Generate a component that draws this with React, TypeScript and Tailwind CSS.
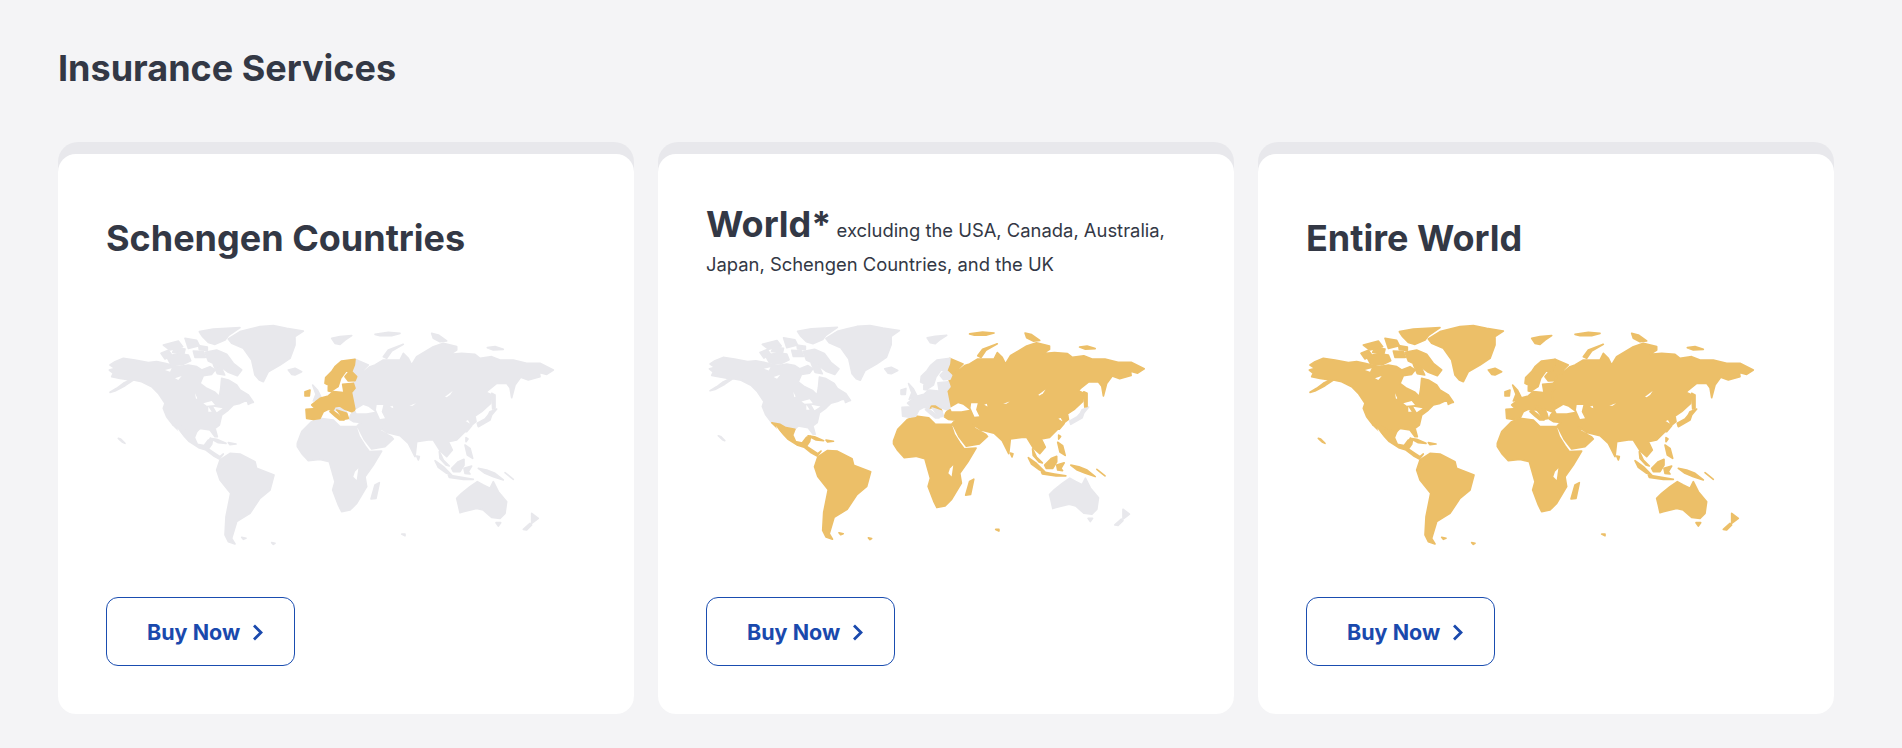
import React from "react";

type Region = "eu" | "west" | "rest";

// coastlines traced by hand in a 1380x720 box
const SHAPES: { region: Region; points: string }[] = [
	// alaska, canada, usa
	{ region: "west", points: "30,150 45,140 70,130 105,135 145,143 170,140 195,145 215,150 240,155 265,150 290,155 305,165 330,155 345,165 335,178 310,182 300,205 320,220 345,232 358,245 362,222 365,190 385,195 410,210 420,225 445,240 460,262 435,258 420,265 400,270 385,285 365,300 358,330 345,340 352,365 345,365 330,345 300,340 290,350 262,345 245,335 219,330 200,305 190,280 195,265 175,235 155,215 125,200 100,195 75,212 45,228 30,232 50,220 70,205 90,195 60,190 35,185 40,175 28,165 45,160" },
	{ region: "west", points: "315,112 350,105 380,118 400,145 425,165 412,182 385,172 362,155 325,138" },
	{ region: "west", points: "200,125 235,116 265,120 272,137 245,150 212,147" },
	{ region: "west", points: "183,115 205,106 215,120 195,132" },
	{ region: "west", points: "190,90 235,78 248,95 210,105" },
	{ region: "west", points: "225,98 255,102 252,115 218,112" },
	{ region: "west", points: "255,70 290,76 298,92 265,100" },
	{ region: "west", points: "298,50 340,42 420,38 385,62 375,75 345,88 325,82 308,65" },
	{ region: "west", points: "280,108 310,110 316,127 285,127" },
	{ region: "west", points: "296,92 322,96 322,106 298,104" },
	{ region: "west", points: "340,148 365,160 374,180 352,176" },
	{ region: "west", points: "440,250 458,262 445,268" },
	{ region: "west", points: "55,370 62,372 75,385 68,382" },
	// greenland, iceland, svalbard
	{ region: "west", points: "385,72 420,50 450,42 480,35 520,32 560,40 610,48 585,65 585,90 570,130 540,150 505,170 490,200 478,195 465,180 455,135 430,100 395,85" },
	{ region: "west", points: "565,165 585,160 605,170 585,180 575,178" },
	{ region: "west", points: "695,70 720,65 755,62 735,75 720,88 705,85" },
	// uk
	{ region: "west", points: "638,210 652,225 665,250 640,258 648,238" },
	// japan
	{ region: "west", points: "1170,290 1190,282 1175,300 1170,315 1135,335 1132,325 1155,312 1165,300" },
	// australia, tasmania, nz
	{ region: "west", points: "1070,550 1085,535 1110,515 1132,500 1150,510 1170,520 1180,500 1195,530 1220,560 1215,595 1200,610 1175,607 1150,585 1130,580 1090,590 1080,593 1075,570" },
	{ region: "west", points: "1188,623 1202,623 1195,633" },
	{ region: "west", points: "1295,595 1315,610 1295,625" },
	{ region: "west", points: "1270,643 1290,625 1295,630 1280,645" },
	// russia and asia, with turkey and arabia
	{ region: "rest", points: "765,133 805,150 790,165 782,178 810,155 825,150 850,135 900,135 910,115 925,130 935,150 950,125 975,110 1000,95 1030,85 1070,95 1070,105 1050,118 1085,115 1125,118 1140,130 1175,125 1200,135 1240,135 1280,145 1320,145 1360,165 1340,178 1318,172 1320,185 1285,195 1262,187 1245,210 1235,248 1230,218 1220,205 1190,205 1165,225 1158,232 1175,240 1172,265 1145,290 1125,303 1128,320 1115,330 1105,312 1092,318 1115,332 1100,350 1095,350 1070,375 1045,380 1057,405 1040,425 1020,407 1000,375 985,375 950,380 945,425 925,385 900,362 860,352 835,336 842,348 875,366 880,372 855,395 815,402 792,372 776,340 770,335 782,322 760,320 748,312 752,300 765,285 760,260 755,235 765,220 760,205 767,197 770,185 755,170 763,150" },
	{ region: "rest", points: "705,275 720,273 735,283 740,295 710,285 700,285" },
	{ region: "rest", points: "850,125 865,105 910,88 875,108 860,130" },
	{ region: "rest", points: "995,55 1015,60 1040,78 1020,80 1000,70" },
	{ region: "rest", points: "825,58 865,52 900,55 875,62 840,62" },
	{ region: "rest", points: "1162,98 1185,95 1210,103 1180,105" },
	{ region: "rest", points: "1175,235 1185,240 1185,280 1178,282" },
	{ region: "rest", points: "1098,368 1104,372 1098,380" },
	// africa, madagascar
	{ region: "rest", points: "592,395 592,385 605,350 635,320 660,310 700,315 720,335 768,335 778,365 795,392 808,410 845,408 820,450 795,485 800,515 770,565 750,585 725,590 715,570 698,525 705,500 695,465 688,440 660,433 625,437 605,415" },
	{ region: "rest", points: "825,510 838,503 828,550 813,552" },
	// mexico, central america, caribbean
	{ region: "rest", points: "219,330 245,335 262,345 290,350 283,368 292,388 312,392 325,375 338,372 335,388 325,402 345,415 360,425 370,417 358,432 340,422 318,405 296,398 268,380 245,355" },
	{ region: "rest", points: "330,370 350,373 378,385 355,383" },
	{ region: "rest", points: "385,383 408,387 390,389" },
	// south america
	{ region: "rest", points: "350,465 360,435 390,415 420,417 465,440 470,460 522,480 510,525 480,550 450,595 410,620 395,670 405,687 385,680 375,660 378,605 392,535 360,495" },
	{ region: "rest", points: "425,667 438,670 430,673" },
	{ region: "rest", points: "515,683 525,685 520,688" },
	{ region: "rest", points: "905,657 915,657 915,662" },
	// south east asia islands
	{ region: "rest", points: "1018,410 1030,435 1048,453 1038,450 1020,430" },
	{ region: "rest", points: "1005,437 1030,455 1055,480 1040,475 1015,457" },
	{ region: "rest", points: "1045,480 1085,487 1120,493 1090,493 1048,487" },
	{ region: "rest", points: "1055,460 1075,440 1092,433 1092,450 1080,470 1060,470" },
	{ region: "rest", points: "1092,460 1115,453 1105,470 1110,477 1095,475" },
	{ region: "rest", points: "1095,390 1110,400 1118,430 1102,420" },
	{ region: "rest", points: "1135,460 1160,465 1185,475 1210,495 1180,485 1155,475" },
	{ region: "rest", points: "1215,473 1240,493 1230,485" },
	{ region: "rest", points: "950,423 958,425 955,435" },
	// schengen block
	{ region: "eu", points: "635,270 660,250 685,243 700,230 730,233 755,235 760,260 765,285 755,290 735,283 720,273 705,275 700,285 685,283 670,290 660,310 640,313 620,310 618,283 650,281 640,275" },
	{ region: "eu", points: "695,285 715,300 732,315 720,315 705,303 690,290" },
	{ region: "eu", points: "710,285 740,295 745,310 730,313 715,290" },
	{ region: "eu", points: "685,215 700,213 695,230 685,228" },
	{ region: "eu", points: "615,230 630,225 628,243 615,243" },
	{ region: "eu", points: "675,205 677,188 695,170 705,155 725,138 765,133 763,150 755,170 770,185 765,197 745,198 735,185 748,170 738,168 722,190 714,215 698,225 685,210" },
	{ region: "eu", points: "728,208 760,205 765,220 755,232 732,232" },
];

// inland seas and lakes
const WATER = [
	"765,285 790,270 805,275 825,290 800,295 770,295",
	"830,270 850,270 845,290 855,310 840,312 828,285",
	"1035,245 1058,228 1050,240 1040,247",
	"928,272 948,265 938,272",
	"870,275 878,272 880,280",
	"765,470 775,460 770,495 760,485",
	"232,340 255,372 250,372 235,350",
	"195,165 215,160 210,170",
	"225,190 245,183 235,195",
	"285,235 292,250 288,252",
	"310,265 335,258 345,270 320,272",
	"325,275 335,290 325,290",
	"340,275 368,280 350,292",
];

function WorldMap({ gold, small }: { gold: Region[]; small?: boolean }) {
	return (
		<svg
			viewBox="0 0 1380 720"
			strokeWidth="5"
			strokeLinejoin="round"
			className={small ? "-ml-1.5 h-[235px] w-[451px]" : "-ml-1.5 h-[240px] w-[460px]"}
		>
			{SHAPES.map((s) => (
				<polygon
					key={s.points}
					points={s.points}
					className={
						gold.includes(s.region)
							? "fill-[#ecbf68] stroke-[#ecbf68]"
							: "fill-[#e8e8ec] stroke-[#e8e8ec]"
					}
				/>
			))}
			{WATER.map((p) => (
				<polygon key={p} points={p} className="fill-white" />
			))}
		</svg>
	);
}

function Card({ heading, map }: { heading: React.ReactNode; map: React.ReactNode }) {
	return (
		<div className="rounded-[20px] bg-[#e8e8ec] pt-3">
			<div className="rounded-[18px] bg-white p-12">
				<div className="h-[113px]">{heading}</div>
				<div className="h-[282px]">{map}</div>
				<button className="flex h-[69px] w-[189px] items-center rounded-[12px] border-[1.5px] border-[#1a4db0] pt-[2px] pl-10 text-[21.5px] font-bold text-[#1a49ad]">
					Buy Now
					<svg viewBox="0 0 12 18" className="ml-3 h-[19px] w-[12px]" fill="none" stroke="currentColor" strokeWidth="2.8">
						<path d="M2 2l7 7-7 7" />
					</svg>
				</button>
			</div>
		</div>
	);
}

export default function App() {
	return (
		<div className="h-screen bg-[#f4f4f6] pl-[58px] pr-[68px] font-['Inter',sans-serif] text-[#333845]">
			<h1 className="h-[142px] pt-[46px] text-[36px] leading-[44px] font-bold">Insurance Services</h1>
			<div className="grid grid-cols-3 gap-6">
				<Card
					heading={<h2 className="text-[36px] leading-[72px] font-bold">Schengen Countries</h2>}
					map={<WorldMap gold={["eu"]} />}
				/>
				<Card
					heading={
						<p className="pt-[5px] text-[18.4px] leading-[34px]">
							<span className="text-[36px] font-bold">World*</span> excluding the USA, Canada, Australia, Japan, Schengen Countries, and the UK
						</p>
					}
					map={<WorldMap gold={["rest"]} small />}
				/>
				<Card
					heading={<h2 className="text-[36px] leading-[72px] font-bold">Entire World</h2>}
					map={<WorldMap gold={["eu", "west", "rest"]} />}
				/>
			</div>
		</div>
	);
}
